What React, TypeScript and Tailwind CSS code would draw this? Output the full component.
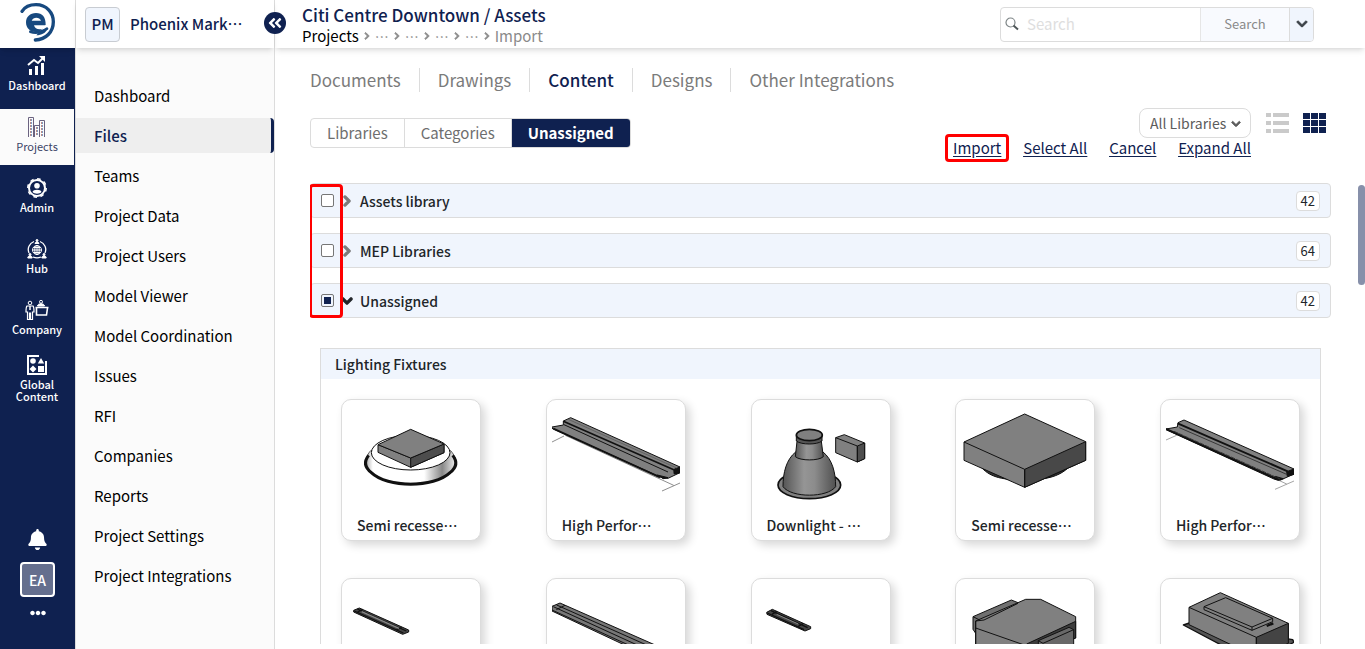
import { useState } from "react";
import type { ReactNode } from "react";
import clsx from "clsx";
import {
  FaAngleDoubleLeft,
  FaBell,
  FaChevronDown,
  FaChevronRight,
  FaEllipsisH,
} from "react-icons/fa";

const railItems = [
  { label: "Dashboard", icon: <ChartIcon /> },
  { label: "Projects", icon: <BuildingsIcon /> },
  { label: "Admin", icon: <AdminIcon /> },
  { label: "Hub", icon: <HubIcon /> },
  { label: "Company", icon: <CompanyIcon /> },
  { label: "Global Content", icon: <ShapesIcon /> },
];

const menuItems = [
  "Dashboard",
  "Files",
  "Teams",
  "Project Data",
  "Project Users",
  "Model Viewer",
  "Model Coordination",
  "Issues",
  "RFI",
  "Companies",
  "Reports",
  "Project Settings",
  "Project Integrations",
];

const tabs = ["Documents", "Drawings", "Content", "Designs", "Other Integrations"];
const views = ["Libraries", "Categories", "Unassigned"];

const libraries = [
  { name: "Assets library", count: 42, open: false },
  { name: "MEP Libraries", count: 64, open: false },
  { name: "Unassigned", count: 42, open: true },
];

const fixtures = [
  { name: "Semi recesse", drawing: <RecessedRound /> },
  { name: "High Perfor", drawing: <LinearLong /> },
  { name: "Downlight -\u00a0", drawing: <Downlight /> },
  { name: "Semi recesse", drawing: <RecessedSquare /> },
  { name: "High Perfor", drawing: <LinearSlim /> },
  { drawing: <StripShort /> },
  { drawing: <StripLong /> },
  { drawing: <StripTiny /> },
  { drawing: <CeilingBox /> },
  { drawing: <Tray /> },
];

function Logo() {
  return (
    <svg viewBox="54 3 114 126" className="h-[42px] w-[38px]" fill="none">
      <path
        d="M63 34C72 20 86 14 105 14c32 0 52 24 52 51 0 31-22 53-54 55"
        stroke="#17497f"
        strokeWidth="10"
        strokeLinecap="round"
      />
      <path
        d="M134 75C135 52 124 39 105 39 87 39 75 51 75 67c0 18 13 29 29 29 15 0 20-10 35-10-4 13-17 19-33 20"
        fill="#17497f"
      />
      <path d="M92 62c2-6 8-9 14-9s12 3 14 9z" fill="white" />
      <path d="M99 76h40v7c-11 0-15 5-23 5-9 0-15-4-17-12z" fill="white" />
      <path d="M88 95c17 7 32 3 50-9" stroke="#17497f" strokeWidth="8" strokeLinecap="round" />
    </svg>
  );
}

function ChartIcon() {
  return (
    <svg viewBox="0 0 20 20" className="size-5" fill="none">
      <path d="M2 19v-6h3v6zM8 19V10h3v9zM14 19V7h3v12z" fill="currentColor" />
      <path d="M1 9l6-5 4 3 5-5" stroke="currentColor" strokeWidth="2" />
      <path d="M12 0h6v6z" fill="currentColor" />
    </svg>
  );
}

function BuildingsIcon() {
  return (
    <svg viewBox="0 0 20 20" className="size-5" fill="none">
      <path d="M1.500 20V.5h5V20M7.500 20V8.500h5M12.500 20V3.500h5V20" stroke="#6b6380" />
      <path d="M3.500 2v17M9.500 10v9M14.500 5v14" stroke="#c08a82" strokeDasharray="2 1" />
      <path d="M4.500 2v17M10.500 10v9M15.500 5v14" stroke="#7c9cc4" strokeDasharray="2 1" />
    </svg>
  );
}

function AdminIcon() {
  return (
    <svg viewBox="0 0 20 20" className="size-5" fill="none">
      <circle cx="10" cy="10" r="8" stroke="currentColor" strokeWidth="2" />
      <circle cx="10" cy="10" r="9.200" stroke="currentColor" strokeWidth="1.500" strokeDasharray="3.600 3.600" />
      <circle cx="10" cy="7.800" r="2.800" fill="currentColor" />
      <path d="M5.500 14c.5-3 8.500-3 9 0-2 2.200-7 2.200-9 0z" fill="currentColor" />
    </svg>
  );
}

function HubIcon() {
  return (
    <svg viewBox="0 0 20 20" className="size-5" fill="none" stroke="currentColor">
      <path d="M7 2.500A8.500 8.500 0 0 0 2 14M13 2.500A8.500 8.500 0 0 1 18 14M6 18c2.500 1 5.500 1 8 0" strokeWidth="1.300" />
      <circle cx="10" cy="11" r="4.500" />
      <path d="M5.500 11h9M10 6.500v9M6.500 8.500h7M6.500 13.500h7" />
      <ellipse cx="10" cy="11" rx="2.200" ry="4.500" />
      <path d="M8 4.500c0-2 4-2 4 0zM.8 19c0-3 4.400-3 4.400 0zM14.800 19c0-3 4.400-3 4.400 0z" fill="currentColor" />
      <circle cx="10" cy="1.500" r="1" fill="currentColor" />
      <circle cx="3" cy="15.500" r="1" fill="currentColor" />
      <circle cx="17" cy="15.500" r="1" fill="currentColor" />
    </svg>
  );
}

function CompanyIcon() {
  return (
    <svg viewBox="0 0 24 20" className="h-5 w-6" fill="none" stroke="currentColor">
      <circle cx="5" cy="3" r="1.800" />
      <path d="M2 6h6c1 1 1 3 1 6H7.500v7.500h-2V13h-1v6.500h-2V12H1c0-3 0-5 1-6z" strokeWidth="1.200" />
      <path d="M5 6v4" strokeWidth="1.500" />
      <circle cx="16" cy="1.800" r="1.500" />
      <path d="M12.500 6c0-3 7-3 7 0z" fill="currentColor" />
      <path d="M10.500 7.500h13M11.500 8v7h10l1-7" strokeWidth="1.600" />
    </svg>
  );
}

function ShapesIcon() {
  return (
    <svg viewBox="0 0 20 20" className="size-5" fill="currentColor">
      <path d="M0 0h12v2H2v16h16V6h2v14H0z" />
      <circle cx="6" cy="6" r="2.800" />
      <path d="M14 3l3.200 5.500h-6.400zM6 10.500l3.500 3.500L6 17.500 2.500 14zM11 11h6v6h-6z" />
    </svg>
  );
}

function SearchIcon() {
  return (
    <svg viewBox="0 0 14 14" className="size-[14px] shrink-0" fill="none">
      <circle cx="5.500" cy="5.500" r="4.500" stroke="#7d8486" strokeWidth="1.200" />
      <path d="M8.500 8.500l4.500 4" stroke="#4e5658" strokeWidth="2" />
    </svg>
  );
}

function ListIcon() {
  return (
    <svg viewBox="0 0 23 20" className="h-5 w-[23px]" fill="currentColor">
      <path d="M0 0h5v4H0zM7 0h16v4H7zM0 8h5v4H0zM7 8h16v4H7zM0 16h5v4H0zM7 16h16v4H7z" />
    </svg>
  );
}

function GridIcon() {
  return (
    <svg viewBox="0 0 23 20" className="h-5 w-[23px]" fill="currentColor">
      <path d="M0 0h7v6H0zM8 0h7v6H8zM16 0h7v6h-7zM0 7h7v6H0zM8 7h7v6H8zM16 7h7v6h-7zM0 14h7v6H0zM8 14h7v6H8zM16 14h7v6h-7z" />
    </svg>
  );
}

function Drawing({ viewBox, children }: { viewBox: string; children: ReactNode }) {
  return (
    <svg
      viewBox={viewBox}
      className="mx-auto h-[110px] w-32"
      fill="#808080"
      stroke="#111111"
      strokeWidth="3"
      strokeLinejoin="round"
    >
      {children}
    </svg>
  );
}

function RecessedRound() {
  return (
    <Drawing viewBox="81 60 384 330">
      <defs>
        <linearGradient id="rim" x1="0" x2="1">
          <stop offset="0" stopColor="#aaaaaa" />
          <stop offset="0.08" stopColor="#ffffff" />
          <stop offset="0.65" stopColor="#ffffff" />
          <stop offset="0.85" stopColor="#888888" />
          <stop offset="1" stopColor="#eeeeee" />
        </linearGradient>
      </defs>
      <path d="M152 212c-40 45 0 98 120 98s160-53 120-98z" fill="url(#rim)" strokeWidth="2" />
      <path d="M146 226c-16 20-12 36 8 52 48 46 188 46 236 0 20-16 24-32 8-52" fill="none" strokeWidth="9" />
      <ellipse cx="272" cy="218" rx="118" ry="52" fill="white" />
      <path d="M174 194l98 40 100-42v26l-100 44-98-45z" />
      <path d="M272 234v28l100-44v-26z" fill="#4d4d4d" />
      <path d="M174 194l98-46 100 44-100 42z" />
    </Drawing>
  );
}

function LinearLong() {
  return (
    <Drawing viewBox="696 60 384 330">
      <path d="M696 186l36-18M736 166l325 150M1026 333l54-24" fill="none" stroke="#555555" strokeWidth="2" />
      <path d="M696 141l34-6 0-12 22-10 328 148v17l-36 17-16-1-332-149z" />
      <path d="M730 124l333 146v10l17-3v-16" fill="none" strokeWidth="5" />
      <path d="M700 146l320 146" fill="none" strokeWidth="6" />
      <path d="M732 134l312 142" fill="none" strokeWidth="3" />
      <path d="M1062 268l18-7v16l-16 5zM1012 285l32 8-14 3z" fill="#111111" />
      <path d="M745 118l325 146" fill="none" stroke="#555555" strokeWidth="2" />
    </Drawing>
  );
}

function Downlight() {
  return (
    <Drawing viewBox="141 60 384 330">
      <defs>
        <linearGradient id="dome" x1="0" x2="1">
          <stop offset="0" stopColor="#555555" />
          <stop offset="0.4" stopColor="#959595" />
          <stop offset="0.6" stopColor="#8c8c8c" />
          <stop offset="1" stopColor="#505050" />
        </linearGradient>
      </defs>
      <ellipse cx="298" cy="315" rx="94" ry="41" strokeWidth="5" />
      <path d="M219 320c0-42 10-82 38-104h82c28 22 38 62 38 104-25 34-133 34-158 0z" fill="url(#dome)" />
      <path d="M261 184l-5 46c14 13 71 13 84 0l-6-46z" fill="url(#dome)" />
      <path d="M259 166v17c15 12 62 12 77 0v-17z" fill="#555555" />
      <ellipse cx="298" cy="165" rx="39" ry="17" strokeWidth="5" />
      <path d="M377 173l26-9 61 25v47l-22 10-65-28z" />
      <path d="M442 198l22-9v47l-22 10z" fill="#4d4d4d" />
      <path d="M377 173l65 25v48" fill="none" />
    </Drawing>
  );
}

function RecessedSquare() {
  return (
    <Drawing viewBox="753 60 384 330">
      <path d="M812 260c25 28 55 40 130 40s110-14 136-40z" fill="#333333" />
      <path d="M762 186l182-84 183 83v56l-183 81-182-81z" />
      <path d="M944 268l183-83v56l-183 81z" fill="#484848" />
      <path d="M762 186l182 82v54" fill="none" />
    </Drawing>
  );
}

function LinearSlim() {
  return (
    <Drawing viewBox="198 60 384 330">
      <path d="M198 180l34-15M530 298l30 14M525 328l57-25" fill="none" stroke="#777777" strokeWidth="2" />
      <path d="M198 147l34-6 2-13 18-8 330 147v15l-40 18-18-2-326-149z" />
      <path d="M233 130l330 144M198 147l330 149" fill="none" strokeWidth="6" />
      <path d="M238 143l322 140" fill="none" strokeWidth="2" />
      <path d="M560 275l22-8v16l-20 6zM525 289l25 7-15 5-10-3z" fill="#111111" />
      <path d="M222 154l318 143" fill="none" stroke="#333333" strokeDasharray="14 3" />
    </Drawing>
  );
}

function StripShort() {
  return (
    <Drawing viewBox="81 597 384 330">
      <path d="M101 691l17-7 148 66v6l-18 7-147-67z" fill="#444444" />
      <path d="M112 687l147 66M103 693l147 66M128 688l-15 8M245 742l-17 8" fill="none" strokeWidth="4" />
      <path d="M125 695l112 50" stroke="#888888" strokeWidth="4" />
    </Drawing>
  );
}

function StripLong() {
  return (
    <Drawing viewBox="696 597 384 330">
      <path d="M696 679l24-10 358 158v20l-28 12-354-166z" fill="#777777" />
      <path d="M700 680l350 160M710 675l355 158M696 690l354 162M735 676l-26 13" fill="none" strokeWidth="3" />
    </Drawing>
  );
}

function StripTiny() {
  return (
    <Drawing viewBox="141 597 384 330">
      <path d="M170 697l17-9 115 52v6l-17 7-114-50z" fill="#444444" />
      <path d="M183 692l110 51M172 699l110 50M200 694l-14 9M280 730l-15 9" fill="none" strokeWidth="4" />
      <path d="M200 703l65 29" stroke="#888888" strokeWidth="3" />
    </Drawing>
  );
}

function CeilingBox() {
  return (
    <Drawing viewBox="753 597 384 330">
      <path d="M789 710l115-50 20 8v60l-115 50-20-30z" fill="#707070" />
      <path d="M797 723l150-65h45l105 52v64l-140 70-160-30z" />
      <path d="M950 792l147-68v50l-147 60z" fill="#3c3c3c" />
      <path d="M797 744l143 50M797 723l25-3 102-50M797 723v80M789 710l20 10" fill="none" />
      <path d="M985 782l92-40 14 7v70H985z" fill="#686868" />
      <path d="M985 782l14 8 92-41" fill="none" />
    </Drawing>
  );
}

function Tray() {
  return (
    <Drawing viewBox="198 597 384 330">
      <path d="M250 735l18-6 310 50 4 8-120 60z" fill="#555555" strokeWidth="4" />
      <path d="M267 682l94-44 204 92v50l-96 50-202-96z" />
      <path d="M469 772l96-42v60l-96 40z" fill="#444444" />
      <path d="M267 682l202 90v50" fill="none" />
      <path d="M312 680l65-27 141 62v10l-62 26-144-62z" />
      <path d="M312 680l144 61 62-26M456 741v10" fill="none" />
      <path d="M500 738l20-8" strokeWidth="7" />
    </Drawing>
  );
}

function Rail() {
  return (
    <aside className="flex w-[75px] shrink-0 flex-col bg-[#0f2150] text-white">
      <a href="#home" aria-label="Home" className="flex h-12 items-center justify-center bg-white pb-1 shadow-md">
        <Logo />
      </a>
      <nav className="flex flex-col gap-[5px]">
        {railItems.map((item) => (
          <a
            key={item.label}
            href="#rail"
            className={clsx(
              "mr-px flex h-14 flex-col items-center justify-center gap-[3px] pb-[5px] text-center text-[11px] leading-3",
              item.label === "Projects" ? "bg-[#fbfbfb] text-[#3b4466]" : "font-medium"
            )}
          >
            {item.icon}
            <span className="px-3">{item.label}</span>
          </a>
        ))}
      </nav>
      <div className="mt-auto flex flex-col items-center gap-2 pb-7">
        <button type="button" aria-label="Notifications" className="mb-1">
          <FaBell className="size-[21px]" />
        </button>
        <button
          type="button"
          className="flex size-[35px] items-center justify-center rounded border-2 border-white bg-[#656f8e] text-sm font-medium"
        >
          EA
        </button>
        <button type="button" aria-label="More">
          <FaEllipsisH className="size-4" />
        </button>
      </div>
    </aside>
  );
}

function Sidebar() {
  return (
    <aside className="relative w-[200px] shrink-0 border-x border-[#dcdcdc] bg-[#fbfbfb]">
      <div className="flex h-12 items-center gap-[10px] bg-white pl-[9px] shadow-md">
        <span className="flex size-[35px] items-center justify-center rounded border border-[#c8ccd2] bg-[#f0f5fd] text-[15px] font-medium text-[#0f2150]">
          PM
        </span>
        <span className="flex text-[15px] font-medium text-[#0f2150]">
          Phoenix Mark<span>⋯</span>
        </span>
      </div>
      <button
        type="button"
        aria-label="Collapse menu"
        className="absolute -right-3 top-3 z-10 flex size-[22px] items-center justify-center rounded-full bg-[#0f2150] text-white"
      >
        <FaAngleDoubleLeft className="size-4" />
      </button>
      <nav className="flex flex-col gap-[5px] pt-[30px]">
        {menuItems.map((item) => (
          <a
            key={item}
            href="#menu"
            className={clsx(
              "flex h-[35px] items-center pl-[18px] pt-[2px] text-[15px]",
              item === "Files"
                ? "rounded-r-sm border-r-[3px] border-[#0f2150] bg-[#eeeeee] font-medium text-[#0f2150]"
                : "text-black"
            )}
          >
            {item}
          </a>
        ))}
      </nav>
    </aside>
  );
}

function Header() {
  return (
    <header className="flex h-12 shrink-0 items-center justify-between bg-white pl-[27px] pr-[51px] shadow-md">
      <div className="pt-1">
        <h1 className="text-[17px] font-medium leading-5 text-[#0f2150]">Citi Centre Downtown / Assets</h1>
        <div className="flex items-center gap-1 text-[15px] leading-[22px] text-[#8a8a8a]">
          <a href="#projects" className="text-black">
            Projects
          </a>
          {[0, 1, 2, 3].map((step) => (
            <span key={step} className="flex items-center gap-1">
              <FaChevronRight className="size-2 stroke-current stroke-[60]" />
              <span className="text-sm">⋯</span>
            </span>
          ))}
          <FaChevronRight className="size-2 stroke-current stroke-[60]" />
          <span>Import</span>
        </div>
      </div>
      <form className="flex h-[35px] w-[314px] overflow-hidden rounded border border-[#dcdcdc]">
        <label className="flex min-w-0 flex-1 items-center gap-2 pl-1">
          <SearchIcon />
          <input
            type="text"
            aria-label="Search"
            placeholder="Search"
            className="w-full min-w-0 text-[15px] outline-none placeholder:text-[#dedede]"
          />
        </label>
        <button
          type="button"
          className="w-[89px] border-l border-[#e6e6e6] bg-[#f8fafe] text-[13px] text-[#8a8a8a]"
        >
          Search
        </button>
        <button
          type="button"
          aria-label="Search options"
          className="flex w-6 items-center justify-center border-l border-[#dcdcdc] bg-[#f0f5fd] text-[#3c4248]"
        >
          <FaChevronDown className="size-3 stroke-current stroke-[40]" />
        </button>
      </form>
    </header>
  );
}

export default function App() {
  const [tab, setTab] = useState("Content");
  const [view, setView] = useState("Unassigned");

  return (
    <div className="flex h-screen overflow-hidden bg-white font-['Noto_Sans_CJK_JP','Noto_Sans',sans-serif] text-[#212529]">
      <Rail />
      <Sidebar />
      <div className="flex min-w-0 flex-1 flex-col">
        <Header />
        <main className="flex min-h-0 flex-1 flex-col pb-[5px] pl-[35px] pr-[34px]">
          <div className="flex pt-5">
            {tabs.map((name) => (
              <button
                key={name}
                type="button"
                onClick={() => setTab(name)}
                className={clsx(
                  "h-6 border-r border-[#dcdcdc] px-[18px] text-[17px] leading-6 first:pl-0 last:border-r-0",
                  tab === name ? "font-medium text-[#0f2150]" : "text-[#7b7b7b]"
                )}
              >
                {name}
              </button>
            ))}
          </div>
          <div className="flex h-[91px] shrink-0 justify-between">
            <div className="mt-[26px] flex h-[30px] overflow-hidden rounded border border-[#dcdcdc]">
              {views.map((name) => (
                <button
                  key={name}
                  type="button"
                  onClick={() => setView(name)}
                  className={clsx(
                    "border-r border-[#dcdcdc] px-4 text-[15px] leading-7 last:border-r-0",
                    view === name ? "bg-[#0f2150] font-bold text-white" : "text-[#6e6e6e]"
                  )}
                >
                  {name}
                </button>
              ))}
            </div>
            <div className="flex gap-[15px] pr-[5px] pt-4">
              <div className="flex flex-col items-end">
                <div className="relative">
                  <select
                    aria-label="Library filter"
                    className="h-[30px] w-28 appearance-none rounded-lg border border-[#dcdcdc] bg-white pl-[10px] text-sm text-[#5c5c5c]"
                  >
                    <option>All Libraries</option>
                  </select>
                  <FaChevronDown className="pointer-events-none absolute right-[10px] top-[11px] size-[10px] stroke-current stroke-[50] text-[#5c5c5c]" />
                </div>
                <div className="flex gap-[22px] text-[15px] leading-5 text-[#0f2150] underline underline-offset-2">
                  <a href="#import" className="relative">
                    Import
                    <span className="absolute -inset-x-2 -inset-y-1 rounded-sm border-[3px] border-[#ff0000]" />
                  </a>
                  <a href="#select">Select All</a>
                  <a href="#cancel">Cancel</a>
                  <a href="#expand">Expand All</a>
                </div>
              </div>
              <div className="flex gap-[14px] pt-[5px]">
                <button type="button" aria-label="List view" className="h-5 text-[#cacaca]">
                  <ListIcon />
                </button>
                <button type="button" aria-label="Grid view" className="h-5 text-[#0f2150]">
                  <GridIcon />
                </button>
              </div>
            </div>
          </div>
          <section className="flex min-h-0 flex-1 flex-col overflow-hidden">
            <div className="relative flex flex-col gap-[15px]">
              {libraries.map((library) => (
                <div
                  key={library.name}
                  className="flex h-[35px] shrink-0 items-center rounded border border-[#dcdcdc] bg-[#f0f5fd] px-[10px]"
                >
                  <label className="flex items-center text-sm font-medium">
                    <input
                      type="checkbox"
                      defaultChecked={library.open}
                      className="mr-[7px] size-[13px] appearance-none rounded-[2px] border border-[#767676] bg-white p-[2px] checked:bg-[#0f2150] checked:bg-clip-content"
                    />
                    {library.open ? (
                      <FaChevronDown className="mr-[7px] size-3 stroke-current stroke-[60]" />
                    ) : (
                      <FaChevronRight className="mr-[7px] size-3 stroke-current stroke-[60] text-[#7b7b7b]" />
                    )}
                    {library.name}
                  </label>
                  <span className="ml-auto rounded border border-[#dcdcdc] bg-white px-1 text-[13px] leading-[18px]">
                    {library.count}
                  </span>
                </div>
              ))}
              <span className="pointer-events-none absolute -left-px bottom-0 top-px w-[34px] rounded-sm border-[3px] border-[#ff0000]" />
            </div>
            <div className="mx-[10px] mt-[30px] border border-[#dcdcdc]">
              <h2 className="h-[30px] bg-[#f0f5fd] pl-[14px] text-sm font-medium leading-[30px]">Lighting Fixtures</h2>
              <div className="grid grid-cols-[repeat(5,140px)] justify-between gap-y-[37px] p-5">
                {fixtures.map((fixture, index) => (
                  <article
                    key={index}
                    className="h-[142px] rounded-[10px] border border-[#dcdcdc] bg-white shadow-[4px_4px_10px_rgba(0,0,0,0.16)]"
                  >
                    {fixture.drawing}
                    {fixture.name && (
                      <h3 className="flex pl-[15px] text-sm font-medium leading-[30px]">
                        {fixture.name}
                        <span>⋯</span>
                      </h3>
                    )}
                  </article>
                ))}
              </div>
            </div>
          </section>
        </main>
      </div>
      <div className="absolute right-0 top-[185px] h-[100px] w-[7px] rounded bg-[#8790aa]" />
    </div>
  );
}
